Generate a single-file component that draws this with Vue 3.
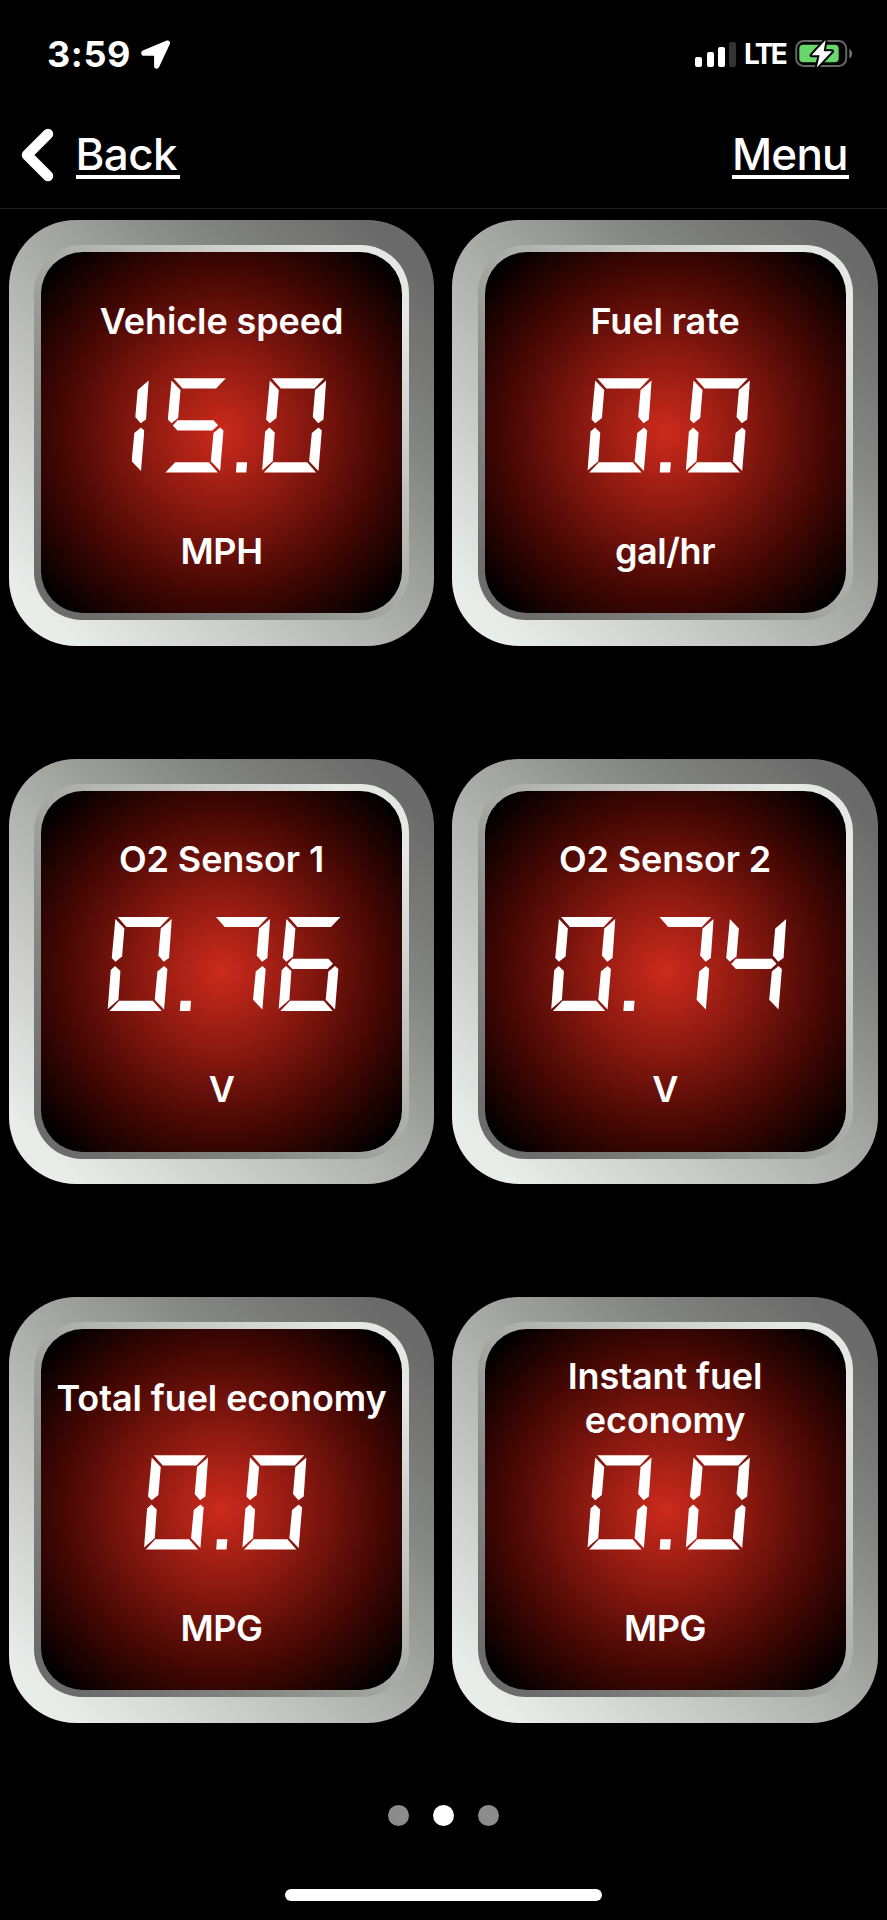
<template>
  <div class="screen">
    <!-- status bar -->
    <header class="status-bar">
      <div class="status-left">
        <span class="time">3:59</span>
        <svg class="location" viewBox="0 0 30 30">
          <path d="M25.800.600 1.800 10.600C-.600 11.800-.200 15.800 2.800 15.800H12.200c.6 0 .9.300.9.900V26c0 3.200 3.600 3.700 5 1L28.600 4.600C29.800 1.900 28.300-.300 25.800.600Z" />
        </svg>
      </div>
      <div class="status-right">
        <div class="signal">
          <i class="bar bar-1"></i>
          <i class="bar bar-2"></i>
          <i class="bar bar-3"></i>
          <i class="bar bar-4"></i>
        </div>
        <span class="network">LTE</span>
        <svg class="battery" viewBox="0 0 58 30">
          <rect class="battery-case" x="1.200" y="2" width="50" height="25" rx="7.500" />
          <path class="battery-cap" d="M54.300 10v9.400c3.700-1.700 3.700-7.700 0-9.400Z" />
          <rect class="battery-level" x="4.300" y="5.800" width="39.400" height="17.500" rx="4" />
          <path class="battery-bolt" d="M30.600 1 16.600 16.300h8L21.800 28.400 37 12.300h-8.300Z" />
        </svg>
      </div>
    </header>

    <!-- navigation -->
    <nav class="nav-bar">
      <button class="back">
        <svg class="chevron" viewBox="0 0 34 54">
          <path d="M27 6 6 27 27 48" />
        </svg>
        <span class="link back-link">Back</span>
      </button>
      <button class="link menu-link">Menu</button>
    </nav>

    <!-- gauges -->
    <main class="gauges">
      <section v-for="g in gauges" :key="g.title" class="gauge">
        <div class="ring">
          <div class="panel">
            <h2 class="title">{{ g.title }}</h2>
            <div class="value">
              <span class="value-text">{{ g.value }}</span>
              <div class="display" aria-hidden="true">
                <span v-for="(ch, i) in g.value" :key="i" class="digit" :class="digitClass(ch)">
                  <i v-for="s in SEGMENTS[ch]" :key="s" class="seg" :class="'seg-' + s"></i>
                </span>
              </div>
            </div>
            <p class="unit">{{ g.unit }}</p>
          </div>
        </div>
      </section>
    </main>

    <footer class="pager">
      <button
        v-for="n in pageCount"
        :key="n"
        class="dot"
        :class="{ active: n === page }"
        :aria-label="'Page ' + n"
        @click="page = n"
      ></button>
    </footer>
    <div class="home-indicator"></div>
  </div>
</template>

<script setup>
import { ref } from 'vue'

// lit segments for each character of the display
const SEGMENTS = {
  0: ['a', 'b', 'c', 'd', 'e', 'f'],
  1: ['b', 'c'],
  2: ['a', 'b', 'g', 'e', 'd'],
  3: ['a', 'b', 'g', 'c', 'd'],
  4: ['f', 'g', 'b', 'c'],
  5: ['a', 'f', 'g', 'c', 'd'],
  6: ['a', 'f', 'g', 'e', 'c', 'd'],
  7: ['a', 'b', 'c'],
  8: ['a', 'b', 'c', 'd', 'e', 'f', 'g'],
  9: ['a', 'b', 'c', 'd', 'f', 'g'],
  '.': ['dp'],
}

const gauges = ref([
  { title: 'Vehicle speed', value: '15.0', unit: 'MPH' },
  { title: 'Fuel rate', value: '0.0', unit: 'gal/hr' },
  { title: 'O2 Sensor 1', value: '0.76', unit: 'V' },
  { title: 'O2 Sensor 2', value: '0.74', unit: 'V' },
  { title: 'Total fuel economy', value: '0.0', unit: 'MPG' },
  { title: 'Instant fuel economy', value: '0.0', unit: 'MPG' },
])

const pageCount = 3
const page = ref(2)

const digitClass = (ch) => ({ 'is-one': ch === '1', 'is-point': ch === '.' })
</script>

<style>
body {
  background: #000;
}
</style>

<style scoped>
.screen {
  width: 887px;
  height: 1920px;
  display: flex;
  flex-direction: column;
  overflow: hidden;
  background: #000;
  color: #fff;
  font-family: Inter, 'Liberation Sans', sans-serif;
}
button {
  padding: 0;
  border: 0;
  background: none;
  color: inherit;
  font: inherit;
  cursor: pointer;
}

/* status bar */
.status-bar {
  box-sizing: border-box;
  height: 110px;
  padding: 34px 34px 0 47px;
  display: flex;
  justify-content: space-between;
  align-items: flex-start;
}
.status-left,
.status-right {
  height: 40px;
  display: flex;
  align-items: center;
}
.time {
  font-size: 36px;
  font-weight: 700;
  line-height: 42px;
  letter-spacing: 0.6px;
}
.location {
  width: 30px;
  height: 30px;
  margin-left: 10px;
  margin-top: 2px;
  fill: #fff;
}
.signal {
  height: 26px;
  margin-top: 0;
  display: flex;
  align-items: flex-end;
  gap: 4.2px;
}
.bar {
  width: 7px;
  border-radius: 2px;
  background: #fff;
}
.bar-1 {
  height: 10px;
}
.bar-2 {
  height: 15px;
}
.bar-3 {
  height: 20px;
}
.bar-4 {
  height: 25px;
  background: #333;
}
.network {
  width: 45px;
  margin-left: 8px;
  font-size: 28px;
  font-weight: 700;
  line-height: 42px;
  letter-spacing: -2.6px;
}
.battery {
  width: 58px;
  height: 30px;
  margin-left: 6px;
}
.battery-case {
  fill: none;
  stroke: #666;
  stroke-width: 2;
}
.battery-cap {
  fill: #777;
}
.battery-level {
  fill: #69d76b;
}
.battery-bolt {
  fill: #fff;
  stroke: #000;
  stroke-width: 4;
  stroke-linejoin: round;
  paint-order: stroke;
}

/* navigation */
.nav-bar {
  box-sizing: border-box;
  height: 99px;
  padding: 18px 38px 0 21px;
  display: flex;
  justify-content: space-between;
  align-items: flex-start;
  border-bottom: 1px solid #222;
}
.back {
  display: flex;
  align-items: flex-start;
}
.chevron {
  width: 34px;
  height: 54px;
  fill: none;
  stroke: #fff;
  stroke-width: 10.500;
  stroke-linecap: round;
  stroke-linejoin: round;
}
.link {
  height: 47px;
  box-sizing: border-box;
  margin-top: 4px;
  border-bottom: 4px solid #fff;
  font-size: 44px;
  font-weight: 550;
  line-height: 45px;
  text-align: left;
}
.back-link {
  width: 104px;
  margin-left: 21px;
  letter-spacing: -0.6px;
  text-indent: -0.5px;
}
.menu-link {
  width: 117px;
  letter-spacing: -0.8px;
}

/* gauges */
.gauges {
  display: grid;
  grid-template-columns: repeat(2, 425.5px);
  grid-auto-rows: 425.5px;
  gap: 113px 18px;
  padding: 11px 8.8px 0;
}
.gauge {
  display: grid;
  place-items: center;
  border-radius: 67px;
  background: linear-gradient(to top right, #e9edea 8%, #a9aba7 50%, #858783 70%, #6a6a6a 92%);
}
.ring {
  width: 375px;
  height: 375px;
  display: grid;
  place-items: center;
  border-radius: 48px;
  background: linear-gradient(to top right, #6c6c6c 8%, #858783 30%, #a7a9a5 50%, #e4e7e3 90%);
}
.panel {
  box-sizing: border-box;
  width: 361px;
  height: 361px;
  padding-top: 24px;
  display: flex;
  flex-direction: column;
  align-items: center;
  border-radius: 42px;
  background: radial-gradient(circle 236px at center, #cc2a1c, #8f1a11 32%, #450703 68%, #000);
}
.title {
  width: 340px;
  height: 89px;
  margin: 0 0 13px;
  display: flex;
  align-items: center;
  justify-content: center;
  text-align: center;
  font-size: 36px;
  font-weight: 600;
  line-height: 44px;
  letter-spacing: -0.1px;
}
.unit {
  margin: 56px 0 0;
  font-size: 36px;
  font-weight: 600;
  line-height: 44px;
  letter-spacing: -0.4px;
}

/* slanted seven-segment display, drawn on a 72.67 x 94.33 cell */
.value {
  display: grid;
  place-items: center;
  height: 94.33px;
}
.value-text,
.display {
  grid-area: 1 / 1;
}
.value-text {
  color: transparent;
  font-size: 36px;
  line-height: 50px;
}
.display {
  display: flex;
}
.digit {
  width: 72.67px;
  height: 94.33px;
  display: grid;
  grid-template-columns: 72.67px;
}
.is-one {
  width: 39.5px;
  justify-content: end;
}
.is-one .seg {
  transform: translateX(-6.5px);
}
.is-point {
  width: 25.67px;
}
.seg {
  grid-area: 1 / 1;
  background: #fff;
}
.seg-a {
  clip-path: polygon(17.67px 0, 70px 0, 60.33px 10.33px, 26.67px 10.33px);
}
.seg-b {
  clip-path: polygon(72px 2.33px, 69.33px 41.33px, 64px 45px, 58.67px 38.67px, 61px 11.67px);
}
.seg-c {
  clip-path: polygon(64.33px 49.33px, 67.67px 52.33px, 64.33px 92.67px, 55px 83px, 57.67px 54.67px);
}
.seg-d {
  clip-path: polygon(19.33px 84px, 53px 84px, 62px 94.33px, 9.67px 94.33px);
}
.seg-e {
  clip-path: polygon(15.33px 49.33px, 20.67px 54.33px, 18.67px 83px, 8px 92.33px, 11px 53.33px);
}
.seg-f {
  clip-path: polygon(15.67px 2.33px, 24.67px 11.67px, 22.33px 39.67px, 15.67px 45px, 12px 41.33px);
}
.seg-g {
  clip-path: polygon(21.67px 42px, 57.67px 42px, 62.33px 47px, 56.67px 52.33px, 21.67px 52.33px, 17px 47.33px);
}
.seg-dp {
  clip-path: polygon(8.17px 84px, 18.67px 84px, 17.83px 94.33px, 7.5px 94.33px);
}

/* pager */
.pager {
  display: flex;
  justify-content: center;
  gap: 24px;
  margin-top: 82.5px;
}
.dot {
  width: 21px;
  height: 21px;
  border-radius: 50%;
  background: #8c8c8c;
}
.dot.active {
  background: #fff;
}
.home-indicator {
  width: 317px;
  height: 12px;
  margin: 63px auto 0;
  border-radius: 6px;
  background: #fff;
}
</style>
